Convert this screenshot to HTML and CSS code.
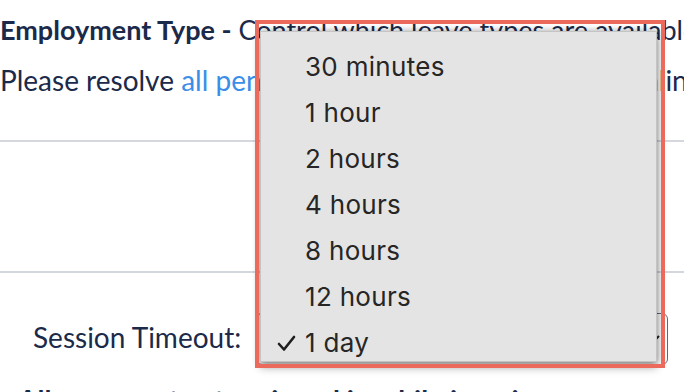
FILE: index.html
```html
<!DOCTYPE html>
<html lang="en">
<head>
    <meta charset="UTF-8">
    <meta name="viewport" content="width=device-width, initial-scale=1.0">
    <title>Leave Settings</title>
    <link rel="stylesheet" href="styles.css">
</head>
<body>
    <div class="page">
        <div class="intro">
            <h2 class="title"><b>Employment Type -</b> Control which leave types are available</h2>
            <p class="note">Please resolve <a href="#">all pending absence requests</a> before unlinking</p>
        </div>

        <div class="section"></div>

        <div class="field">
            <label class="field-label" for="timeout">Session Timeout:</label>
            <div class="select" id="timeout">
                <svg class="chevron" width="14" height="10" viewBox="0 0 14 10"><path d="M2 2 L7 7 L12 2" fill="none" stroke="#222" stroke-width="2"/></svg>
            </div>
        </div>
        <p class="help">Allow users to stay signed in while inactive</p>
    </div>

    <!-- open dropdown with annotation outline -->
    <div class="menu">
        <div class="option">30 minutes</div>
        <div class="option">1 hour</div>
        <div class="option">2 hours</div>
        <div class="option">4 hours</div>
        <div class="option">8 hours</div>
        <div class="option">12 hours</div>
        <div class="option checked">
            <svg class="check" width="19" height="17" viewBox="0 0 19 17"><path d="M2 9 L7 14.5 L17 2" fill="none" stroke="#1e1e1e" stroke-width="2.6" stroke-linecap="round" stroke-linejoin="round"/></svg>
            1 day
        </div>
    </div>
    <div class="highlight"></div>
</body>
</html>
```

FILE: styles.css
```css
body {
  margin: 0;
  padding: 0;
  width: 684px;
  height: 392px;
  overflow: hidden;
  background: #fff;
  font-family: 'Lato', 'Open Sans', sans-serif;
  color: #1b2a4a;
}
.page {
  width: 100%;
}
.intro {
  padding-top: 15px;
  border-bottom: 2px solid #d4d8de;
  padding-bottom: 43px;
}
.title {
  margin: 0;
  font-size: 27px;
  line-height: 30px;
  font-weight: 400;
  white-space: nowrap;
}
.title b {
  font-weight: 700;
}
.note {
  margin: 18px 0 0;
  font-size: 28px;
  line-height: 34px;
  white-space: nowrap;
}
.note a {
  color: #3b8ee8;
  text-decoration: none;
}
.section {
  height: 129px;
  border-bottom: 2px solid #d4d8de;
}
.field {
  display: flex;
  align-items: center;
  gap: 15px;
  margin-top: 40px;
  padding-left: 33px;
}
.field-label {
  font-size: 28px;
  line-height: 34px;
  padding-bottom: 4px;
}
.select {
  width: 412px;
  height: 52px;
  box-sizing: border-box;
  border: 1.5px solid #5d687a;
  border-radius: 6px;
  display: flex;
  align-items: center;
  justify-content: flex-end;
  padding: 0 6px 0 16px;
}
.help {
  margin: 18px 0 0;
  padding-left: 18px;
  font-size: 28px;
  line-height: 34px;
  font-weight: 700;
  white-space: nowrap;
}
.menu {
  position: absolute;
  left: 260px;
  top: 31px;
  width: 397px;
  height: 331px;
  box-sizing: border-box;
  padding: 12px 0 0 44px;
  background: #e4e4e4;
  border: 1px solid #c4c4c4;
  box-shadow: 0 0 7px rgba(0, 0, 0, 0.35), 0 6px 8px rgba(0, 0, 0, 0.3);
  font-family: 'Inter', 'Noto Sans', sans-serif;
  font-size: 26px;
  letter-spacing: 0.3px;
  color: #262626;
}
.option {
  height: 46px;
  line-height: 46px;
  position: relative;
}
.check {
  position: absolute;
  left: -28px;
  top: 15px;
}
.highlight {
  position: absolute;
  left: 255px;
  top: 20px;
  width: 410px;
  height: 348px;
  box-sizing: border-box;
  border: 4.5px solid #eb6a5b;
}
```
